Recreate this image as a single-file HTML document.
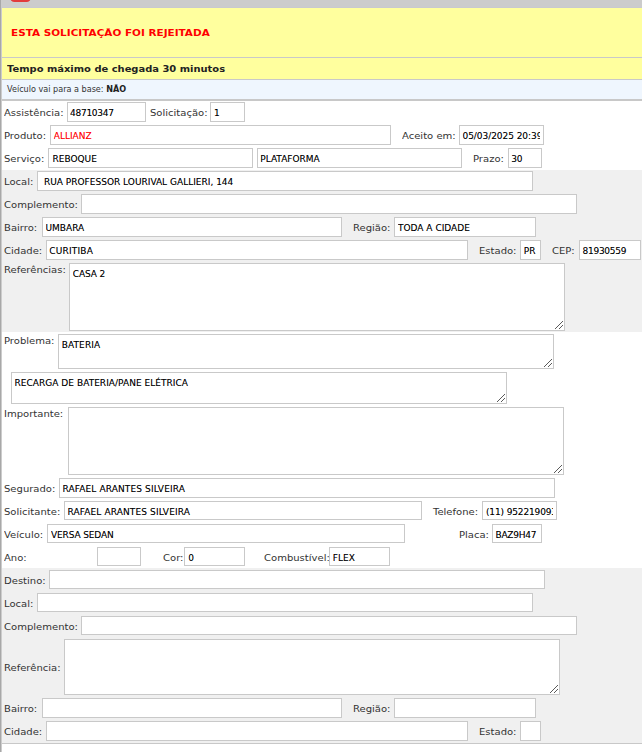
<!DOCTYPE html>
<html lang="pt-BR"><head><meta charset="utf-8"><title>Solicitação</title>
<style>
html,body{margin:0;padding:0}
body{width:642px;height:752px;overflow:hidden;position:relative;background:#fff;color:#333}
.b{position:absolute}
.l{position:absolute;white-space:nowrap;height:12px;color:#333;font-family:'DejaVu Sans','Liberation Sans',sans-serif;font-size:9.5px;line-height:12px;transform:scaleX(1.055);transform-origin:0 0}
.i{position:absolute;box-sizing:border-box;border:1px solid #c9c9c9;background:#fff;overflow:hidden}
.t{position:absolute;white-space:nowrap;height:12px;clip-path:inset(-4px 0 -4px 0);color:#000;text-shadow:0 0 0 rgba(0,0,0,.35);font-family:'DejaVu Sans','Liberation Sans',sans-serif;font-size:9px;line-height:12px}
.g{position:absolute;right:1px;bottom:1px}
</style></head>
<body>
<div class="b" style="left:0px;top:0px;width:642px;height:8px;background:#ccc"></div>
<div class="b" style="left:9.8px;top:-7.25px;width:21.6px;height:9px;background:#e23c3c;border-radius:5px"></div>
<div class="b" style="left:2px;top:7px;width:640px;height:1px;background:#c9c9cf"></div>
<div class="b" style="left:2px;top:8px;width:640px;height:71px;background:#ffff9e"></div>
<div class="b" style="left:2px;top:57px;width:640px;height:1px;background:#c9c9c9"></div>
<div class="b" style="left:2px;top:79px;width:640px;height:1px;background:#c9c9c9"></div>
<div class="b" style="left:2px;top:80px;width:640px;height:19px;background:#eff6fe"></div>
<div class="b" style="left:2px;top:99px;width:640px;height:2px;background:#c8c8c8"></div>
<div class="b" style="left:2px;top:170px;width:640px;height:162px;background:#f0f0f0"></div>
<div class="b" style="left:2px;top:568px;width:640px;height:175px;background:#f0f0f0"></div>
<div class="b" style="left:2px;top:743px;width:640px;height:1px;background:#c8c8c8"></div>
<div class="b" style="left:0px;top:0px;width:1px;height:752px;background:#a8a8a8"></div>
<div class="b" style="left:1px;top:0px;width:1px;height:752px;background:#ccc"></div>
<div class="l" style="left:10.75px;top:27px;font-weight:bold;color:#f00;transform:scaleX(1.1)" id="h1">ESTA SOLICITAÇÃO FOI REJEITADA</div>
<div class="l" style="left:7.25px;top:63px;font-weight:bold;color:#222;transform:scaleX(1.045)" id="h2">Tempo máximo de chegada 30 minutos</div>
<div class="l" style="left:7px;top:83px;font-size:8.1px;transform:none" id="h3">Veículo vai para a base: <b style="color:#222">NÃO</b></div>
<div class="l" style="left:4px;top:107px">Assistência:</div>
<div class="l" style="left:149.5px;top:107px">Solicitação:</div>
<div class="l" style="left:4.25px;top:130px">Produto:</div>
<div class="l" style="left:401.75px;top:130px">Aceito em:</div>
<div class="l" style="left:3.5px;top:153px">Serviço:</div>
<div class="l" style="left:473px;top:153px">Prazo:</div>
<div class="l" style="left:4px;top:176px">Local:</div>
<div class="l" style="left:3.75px;top:199px">Complemento:</div>
<div class="l" style="left:4px;top:222px">Bairro:</div>
<div class="l" style="left:352.75px;top:222px">Região:</div>
<div class="l" style="left:4.25px;top:245px">Cidade:</div>
<div class="l" style="left:478.75px;top:245px">Estado:</div>
<div class="l" style="left:551.5px;top:245px">CEP:</div>
<div class="l" style="left:4.25px;top:264px">Referências:</div>
<div class="l" style="left:3.5px;top:335px">Problema:</div>
<div class="l" style="left:4px;top:408px">Importante:</div>
<div class="l" style="left:4px;top:483px">Segurado:</div>
<div class="l" style="left:4px;top:506px">Solicitante:</div>
<div class="l" style="left:432.75px;top:506px">Telefone:</div>
<div class="l" style="left:4.25px;top:529px">Veículo:</div>
<div class="l" style="left:459.25px;top:529px">Placa:</div>
<div class="l" style="left:4.25px;top:552px">Ano:</div>
<div class="l" style="left:162.75px;top:552px">Cor:</div>
<div class="l" style="left:263.5px;top:552px">Combustível:</div>
<div class="l" style="left:4.25px;top:575px">Destino:</div>
<div class="l" style="left:4px;top:598px">Local:</div>
<div class="l" style="left:4px;top:621px">Complemento:</div>
<div class="l" style="left:4px;top:662px">Referência:</div>
<div class="l" style="left:4px;top:703px">Bairro:</div>
<div class="l" style="left:352.75px;top:703px">Região:</div>
<div class="l" style="left:4.25px;top:726px">Cidade:</div>
<div class="l" style="left:478.75px;top:726px">Estado:</div>
<div class="i" style="left:67px;top:102px;width:79px;height:20px"><div class="t" style="left:2px;top:4px;width:72px;letter-spacing:-0.26px">48710347</div></div>
<div class="i" style="left:210px;top:102px;width:35px;height:20px"><div class="t" style="left:3px;top:4px;width:27px">1</div></div>
<div class="i" style="left:50px;top:125px;width:341px;height:20px"><div class="t" style="left:2.75px;top:4px;width:333.25px;color:#f00;text-shadow:0 0 0 rgba(255,0,0,.35)">ALLIANZ</div></div>
<div class="i" style="left:459px;top:125px;width:85px;height:20px"><div class="t" style="left:2.5px;top:4px;width:77.5px;letter-spacing:-0.05px">05/03/2025 20:39</div></div>
<div class="i" style="left:48px;top:148px;width:205px;height:20px"><div class="t" style="left:3.5px;top:4px;width:196.5px">REBOQUE</div></div>
<div class="i" style="left:257px;top:148px;width:205px;height:20px"><div class="t" style="left:2.25px;top:4px;width:197.75px">PLATAFORMA</div></div>
<div class="i" style="left:508px;top:148px;width:34px;height:20px"><div class="t" style="left:2.25px;top:4px;width:26.75px;letter-spacing:-0.26px">30</div></div>
<div class="i" style="left:37px;top:171px;width:496px;height:20px"><div class="t" style="left:6px;top:4px;width:485px">RUA PROFESSOR LOURIVAL GALLIERI, 144</div></div>
<div class="i" style="left:81px;top:194px;width:496px;height:20px"></div>
<div class="i" style="left:42px;top:217px;width:300px;height:20px"><div class="t" style="left:2.5px;top:4px;width:292.5px">UMBARA</div></div>
<div class="i" style="left:394px;top:217px;width:142px;height:20px"><div class="t" style="left:3px;top:4px;width:134px">TODA A CIDADE</div></div>
<div class="i" style="left:46px;top:240px;width:422px;height:20px"><div class="t" style="left:2.25px;top:4px;width:414.75px;letter-spacing:0.19px">CURITIBA</div></div>
<div class="i" style="left:520px;top:240px;width:21px;height:20px"><div class="t" style="left:2.75px;top:4px;width:13.25px">PR</div></div>
<div class="i" style="left:579px;top:240px;width:62px;height:20px"><div class="t" style="left:2.5px;top:4px;width:54.5px;letter-spacing:-0.26px">81930559</div></div>
<div class="i" style="left:69px;top:263px;width:496px;height:68px"><div class="t" style="left:2.75px;top:4px;width:488.25px;letter-spacing:-0.1px">CASA 2</div><svg class="g" width="8" height="8" viewBox="0 0 8 8" shape-rendering="crispEdges"><path d="M0 7h1v1h-1zM1 6h1v1h-1zM2 5h1v1h-1zM3 4h1v1h-1zM4 3h1v1h-1zM5 2h1v1h-1zM6 1h1v1h-1zM7 0h1v1h-1zM4 7h1v1h-1zM5 6h1v1h-1zM6 5h1v1h-1zM7 4h1v1h-1z" fill="#5a5a5a"/></svg></div>
<div class="i" style="left:58px;top:334px;width:496px;height:35px"><div class="t" style="left:2.75px;top:4px;width:488.25px;letter-spacing:0.08px">BATERIA</div><svg class="g" width="8" height="8" viewBox="0 0 8 8" shape-rendering="crispEdges"><path d="M0 7h1v1h-1zM1 6h1v1h-1zM2 5h1v1h-1zM3 4h1v1h-1zM4 3h1v1h-1zM5 2h1v1h-1zM6 1h1v1h-1zM7 0h1v1h-1zM4 7h1v1h-1zM5 6h1v1h-1zM6 5h1v1h-1zM7 4h1v1h-1z" fill="#5a5a5a"/></svg></div>
<div class="i" style="left:11px;top:372px;width:496px;height:32px"><div class="t" style="left:2.5px;top:4px;width:488.5px;letter-spacing:0.03px">RECARGA DE BATERIA/PANE ELÉTRICA</div><svg class="g" width="8" height="8" viewBox="0 0 8 8" shape-rendering="crispEdges"><path d="M0 7h1v1h-1zM1 6h1v1h-1zM2 5h1v1h-1zM3 4h1v1h-1zM4 3h1v1h-1zM5 2h1v1h-1zM6 1h1v1h-1zM7 0h1v1h-1zM4 7h1v1h-1zM5 6h1v1h-1zM6 5h1v1h-1zM7 4h1v1h-1z" fill="#5a5a5a"/></svg></div>
<div class="i" style="left:68px;top:407px;width:496px;height:68px"><svg class="g" width="8" height="8" viewBox="0 0 8 8" shape-rendering="crispEdges"><path d="M0 7h1v1h-1zM1 6h1v1h-1zM2 5h1v1h-1zM3 4h1v1h-1zM4 3h1v1h-1zM5 2h1v1h-1zM6 1h1v1h-1zM7 0h1v1h-1zM4 7h1v1h-1zM5 6h1v1h-1zM6 5h1v1h-1zM7 4h1v1h-1z" fill="#5a5a5a"/></svg></div>
<div class="i" style="left:59px;top:478px;width:496px;height:20px"><div class="t" style="left:2.5px;top:4px;width:488.5px;letter-spacing:0.12px">RAFAEL ARANTES SILVEIRA</div></div>
<div class="i" style="left:64px;top:501px;width:358px;height:19px"><div class="t" style="left:2.5px;top:4px;width:350.5px;letter-spacing:0.12px">RAFAEL ARANTES SILVEIRA</div></div>
<div class="i" style="left:482px;top:501px;width:75px;height:19px"><div class="t" style="left:3px;top:4px;width:67px;letter-spacing:-0.14px">(11) 952219093</div></div>
<div class="i" style="left:47px;top:524px;width:358px;height:19px"><div class="t" style="left:3px;top:4px;width:350px;letter-spacing:-0.14px">VERSA SEDAN</div></div>
<div class="i" style="left:492px;top:524px;width:50px;height:19px"><div class="t" style="left:2.5px;top:4px;width:42.5px;letter-spacing:-0.25px">BAZ9H47</div></div>
<div class="i" style="left:97px;top:547px;width:44px;height:19px"></div>
<div class="i" style="left:184px;top:547px;width:61px;height:19px"><div class="t" style="left:3.25px;top:4px;width:52.75px">0</div></div>
<div class="i" style="left:329px;top:547px;width:61px;height:19px"><div class="t" style="left:2.75px;top:4px;width:53.25px">FLEX</div></div>
<div class="i" style="left:49px;top:570px;width:496px;height:19px"></div>
<div class="i" style="left:37px;top:593px;width:496px;height:19px"></div>
<div class="i" style="left:81px;top:616px;width:496px;height:19px"></div>
<div class="i" style="left:64px;top:639px;width:496px;height:56px"><svg class="g" width="8" height="8" viewBox="0 0 8 8" shape-rendering="crispEdges"><path d="M0 7h1v1h-1zM1 6h1v1h-1zM2 5h1v1h-1zM3 4h1v1h-1zM4 3h1v1h-1zM5 2h1v1h-1zM6 1h1v1h-1zM7 0h1v1h-1zM4 7h1v1h-1zM5 6h1v1h-1zM6 5h1v1h-1zM7 4h1v1h-1z" fill="#5a5a5a"/></svg></div>
<div class="i" style="left:42px;top:698px;width:300px;height:20px"></div>
<div class="i" style="left:394px;top:698px;width:142px;height:20px"></div>
<div class="i" style="left:46px;top:721px;width:422px;height:20px"></div>
<div class="i" style="left:520px;top:721px;width:21px;height:20px"></div>
</body></html>
